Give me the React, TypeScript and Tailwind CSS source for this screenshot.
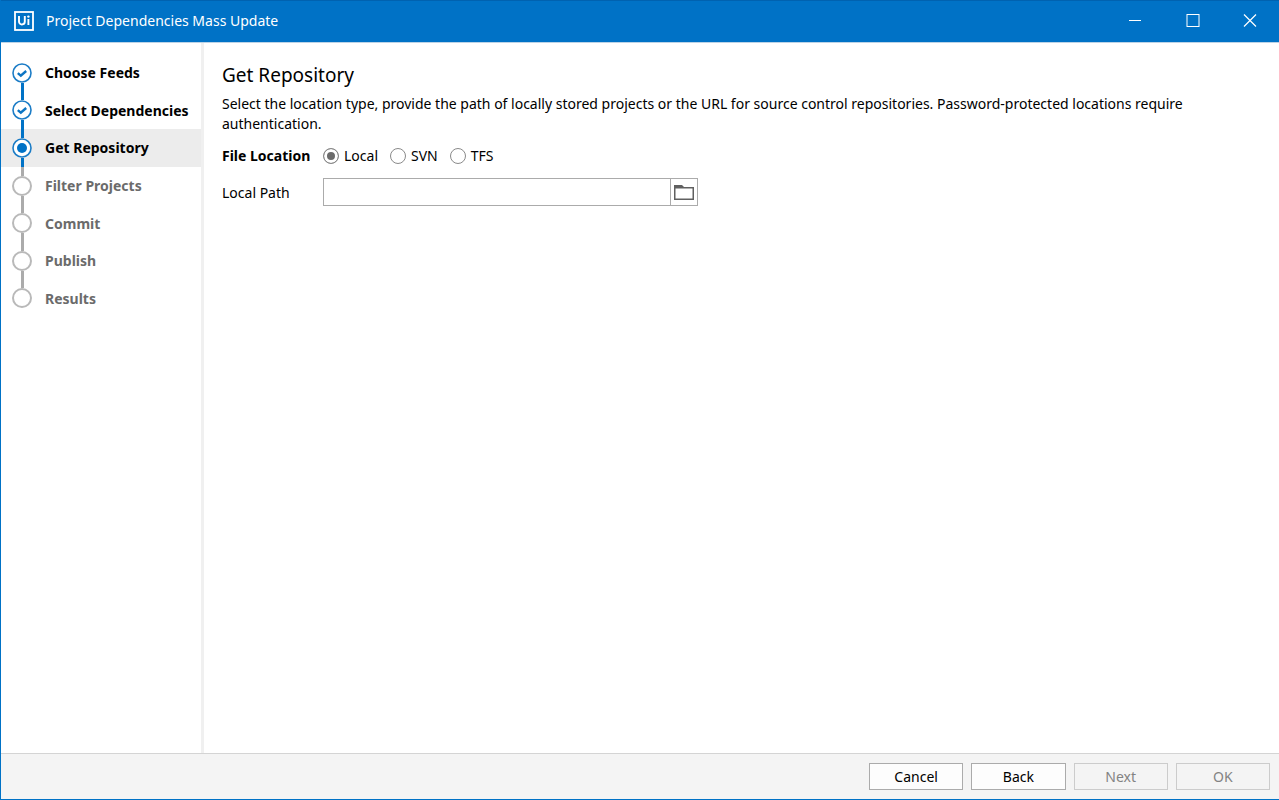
import React, { useState } from "react";
import { clsx } from "clsx";

type StepState = "done" | "current" | "pending";

const steps: { label: string; state: StepState }[] = [
  { label: "Choose Feeds", state: "done" },
  { label: "Select Dependencies", state: "done" },
  { label: "Get Repository", state: "current" },
  { label: "Filter Projects", state: "pending" },
  { label: "Commit", state: "pending" },
  { label: "Publish", state: "pending" },
  { label: "Results", state: "pending" },
];

const locations = ["Local", "SVN", "TFS"];

function StepIcon({ state }: { state: StepState }) {
  return (
    <svg viewBox="0 0 20 20" className="block size-5 shrink-0" fill="none">
      <circle cx="10" cy="10" r="9" fill="#fff" stroke={state === "pending" ? "#b9b9b9" : "#1b7cc6"} strokeWidth={state === "pending" ? 2 : 1.6} />
      {state === "done" && <path d="M5.8 10.2 8.8 12.7 14.2 8" stroke="#0d75c3" strokeWidth="2.4" />}
      {state === "current" && <circle cx="10" cy="10" r="5" fill="#0072c6" />}
    </svg>
  );
}

function StepRow({ index }: { index: number }) {
  const { label, state } = steps[index];
  const line = state === "pending" ? "bg-[#ababab]" : "bg-[#0072c6]";
  return (
    <li
      aria-current={state === "current" ? "step" : undefined}
      className={clsx("flex gap-[13px] pl-[11px]", state === "current" && "bg-[#ececec]")}
    >
      <div className="flex flex-col items-center">
        <span className={clsx("w-[3px] flex-1", index > 0 && line)} />
        <StepIcon state={state} />
        <span className={clsx("w-[3px] flex-1", index < steps.length - 1 && line)} />
      </div>
      <span className={clsx("self-center pt-px font-bold", state === "pending" && "text-[#6b6b6b]")}>{label}</span>
    </li>
  );
}

function TitleBar() {
  return (
    <header className="flex h-[43px] shrink-0 items-center border-b border-[#bcd3e6] bg-[#0072c6] pl-[13px] text-white shadow-[inset_0_1px_0_#0062b0]">
      <svg viewBox="0 0 20 20" className="size-5" fill="none" stroke="#fff">
        <rect x="1" y="1" width="18" height="18" strokeWidth="1.8" />
        <path d="M5 5v5.6a2.9 2.9 0 0 0 5.8 0V5M14.4 8v6" strokeWidth="1.9" />
        <circle cx="14.4" cy="5.6" r="1.2" fill="#fff" stroke="none" />
      </svg>
      <h1 className="ml-3 flex-1">Project Dependencies Mass Update</h1>
      <button aria-label="Minimize" className="flex h-full w-[58px] items-center justify-center">
        <svg viewBox="0 0 14 14" className="size-[14px]" stroke="#fff">
          <path d="M1 6.5h12" />
        </svg>
      </button>
      <button aria-label="Maximize" className="flex h-full w-[57px] items-center justify-center">
        <svg viewBox="0 0 14 14" className="size-[14px]" stroke="#fff" fill="none">
          <rect x="1" y=".5" width="12" height="12" />
        </svg>
      </button>
      <button aria-label="Close" className="flex h-full w-[58px] items-center justify-center">
        <svg viewBox="0 0 14 14" className="size-[14px]" stroke="#fff" strokeWidth="1.2">
          <path d="m1 .5 12 12M13 .5l-12 12" />
        </svg>
      </button>
    </header>
  );
}

export default function App() {
  const [location, setLocation] = useState("Local");
  const [path, setPath] = useState("");

  return (
    <div className="flex min-h-screen flex-col border-b border-l border-[#0072c6] bg-white font-['Noto_Sans','Open_Sans',sans-serif] text-[14px] leading-5 text-black">
      <TitleBar />

      <div className="flex flex-1">
        <nav className="w-[203px] shrink-0 border-r-[3px] border-[#f0f0f0] pt-[11px]">
          <ol className="grid h-[263px] auto-rows-fr">
            {steps.map((step, i) => (
              <StepRow key={step.label} index={i} />
            ))}
          </ol>
        </nav>

        <main className="flex-1 px-[18px] pt-[19px]">
          <h2 className="text-[19px] leading-[26px]">Get Repository</h2>
          <p className="mt-[6px] max-w-[1000px]">
            Select the location type, provide the path of locally stored projects or the URL for source control repositories. Password-protected locations require authentication.
          </p>

          <fieldset className="mt-3 flex items-center">
            <legend className="float-left w-[101px] font-bold">File Location</legend>
            <div className="flex gap-3">
              {locations.map((name) => (
                <label key={name} className="flex items-center gap-[5px]">
                  <input
                    type="radio"
                    name="location"
                    checked={location === name}
                    onChange={() => setLocation(name)}
                    className="size-4 appearance-none rounded-full border border-[#8a8a8a] bg-white checked:bg-[#6b6b6b] checked:shadow-[inset_0_0_0_3px_#fff]"
                  />
                  {name}
                </label>
              ))}
            </div>
          </fieldset>

          <div className="mt-3 flex items-center">
            <label htmlFor="local-path" className="w-[101px] pt-px">Local Path</label>
            <div className="flex h-7 w-[375px] border border-[#ababab]">
              <input
                id="local-path"
                value={path}
                onChange={(e) => setPath(e.target.value)}
                className="min-w-0 flex-1 px-2 outline-none"
              />
              <button aria-label="Browse" className="flex w-[27px] items-center justify-center border-l border-[#ababab]">
                <svg viewBox="0 0 20 15" className="h-[15px] w-5" fill="none">
                  <path d="M0 0h8l2 2v1H0z" fill="#606060" />
                  <rect x=".75" y="2.75" width="18.5" height="11.5" stroke="#606060" strokeWidth="1.5" />
                </svg>
              </button>
            </div>
          </div>
        </main>
      </div>

      <footer className="flex justify-end border-t border-[#d4d4d4] bg-[#f4f4f4] px-[9px] py-[9px]">
        <div className="grid w-[401px] grid-cols-4 gap-2">
          {["Cancel", "Back", "Next", "OK"].map((name, i) => (
            <button
              key={name}
              disabled={i > 1}
              className="h-[27px] border border-[#ababab] bg-[#fdfdfd] disabled:border-[#cccccc] disabled:bg-[#f4f4f4] disabled:text-[#838383]"
            >
              {name}
            </button>
          ))}
        </div>
      </footer>
    </div>
  );
}
